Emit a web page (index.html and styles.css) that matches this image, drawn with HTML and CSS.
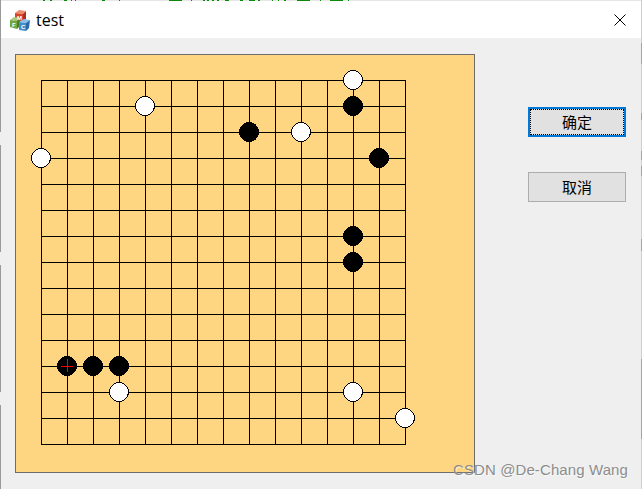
FILE: index.html
```html
<!DOCTYPE html>
<html lang="zh">
<head>
<meta charset="utf-8">
<title>test</title>
<link rel="stylesheet" href="styles.css">
</head>
<body>
<div class="screen">
  <div class="edge-left"></div>
  <div class="window">
    <div class="edge-top"></div>
    <header class="titlebar">
      <svg class="app-icon" width="20" height="21" viewBox="0 0 20 21">
        <polygon class="cube-red-top" points="5,3 9,0 16,1 13,4"/>
        <polygon class="cube-red" points="5,3 13,4 13,12 5,11"/>
        <polygon class="cube-red-side" points="13,4 16,1 16,9 13,12"/>
        <polygon class="cube-green-top" points="0,10 4,7 10,8 7,11"/>
        <polygon class="cube-green" points="0,10 7,11 7,19 0,17"/>
        <polygon class="cube-green-side" points="7,11 10,8 10,16 7,19"/>
        <polygon class="cube-blue-top" points="9,12 14,9 20,10 16,13"/>
        <polygon class="cube-blue" points="9,12 16,13 16,21 9,20"/>
        <polygon class="cube-blue-side" points="16,13 20,10 19,18 16,21"/>
        <text class="cube-letter" x="7" y="9.5">M</text>
        <text class="cube-letter" x="2" y="17">F</text>
        <text class="cube-letter" x="11" y="19">C</text>
      </svg>
      <span class="title">test</span>
      <svg class="close" width="12" height="12" viewBox="0 0 12 12">
        <path d="M0.5 0.5L11.5 11.5M11.5 0.5L0.5 11.5"/>
      </svg>
    </header>
    <main class="content">
      <div class="board">
        <svg class="board-svg" width="458" height="417" viewBox="16 55 458 417">
          <path class="grid" d="M41 80.5H406M41 106.5H406M41 132.5H406M41 158.5H406M41 184.5H406M41 210.5H406M41 236.5H406M41 262.5H406M41 288.5H406M41 314.5H406M41 340.5H406M41 366.5H406M41 392.5H406M41 418.5H406M41 444.5H406M41.5 80V445M67.5 80V445M93.5 80V445M119.5 80V445M145.5 80V445M171.5 80V445M197.5 80V445M223.5 80V445M249.5 80V445M275.5 80V445M301.5 80V445M327.5 80V445M353.5 80V445M379.5 80V445M405.5 80V445"/>
          <circle class="stone white" cx="353" cy="80" r="9.5"/>
          <circle class="stone white" cx="145" cy="106" r="9.5"/>
          <circle class="stone white" cx="301" cy="132" r="9.5"/>
          <circle class="stone white" cx="41" cy="158" r="9.5"/>
          <circle class="stone white" cx="119" cy="392" r="9.5"/>
          <circle class="stone white" cx="353" cy="392" r="9.5"/>
          <circle class="stone white" cx="405" cy="418" r="9.5"/>
          <circle class="stone black" cx="353" cy="106" r="9.5"/>
          <circle class="stone black" cx="249" cy="132" r="9.5"/>
          <circle class="stone black" cx="379" cy="158" r="9.5"/>
          <circle class="stone black" cx="353" cy="236" r="9.5"/>
          <circle class="stone black" cx="353" cy="262" r="9.5"/>
          <circle class="stone black" cx="67" cy="366" r="9.5"/>
          <circle class="stone black" cx="93" cy="366" r="9.5"/>
          <circle class="stone black" cx="119" cy="366" r="9.5"/>
          <path class="last-move" d="M61 366.5H73M67.5 359V372"/>
        </svg>
      </div>
      <div class="actions">
        <button class="btn btn-default" type="button">确定</button>
        <button class="btn" type="button">取消</button>
      </div>
    </main>
  </div>
  <div class="edge-right"></div>
  <div class="watermark">CSDN @De-Chang Wang</div>
</div>
</body>
</html>
```
FILE: styles.css
```css
* { box-sizing: border-box; }
html, body { margin: 0; padding: 0; }
body { width: 642px; height: 489px; overflow: hidden; background: #efefef; }
.screen { position: relative; display: flex; width: 642px; height: 489px; }
.edge-left {
  width: 1px;
  background: linear-gradient(to bottom,
    #9a9a9a 0, #9a9a9a 132px, #efefef 132px, #efefef 145px,
    #9a9a9a 145px, #9a9a9a 252px, #efefef 252px, #efefef 265px,
    #9a9a9a 265px, #9a9a9a 392px, #efefef 392px, #efefef 405px,
    #9a9a9a 405px, #9a9a9a 100%);
}
.edge-right {
  width: 1px;
  background: linear-gradient(to bottom,
    #cfcfcf 0, #cfcfcf 43px, #6fca6f 43px, #6fca6f 64px,
    #cfcfcf 64px, #cfcfcf 113px, #6fca6f 113px, #6fca6f 120px,
    #cfcfcf 120px, #cfcfcf 151px, #6fca6f 151px, #6fca6f 160px,
    #cfcfcf 160px, #cfcfcf 166px, #6fca6f 166px, #6fca6f 176px,
    #cfcfcf 176px, #cfcfcf 239px, #6fca6f 239px, #6fca6f 251px,
    #cfcfcf 251px, #cfcfcf 359px, #6fca6f 359px, #6fca6f 439px,
    #cfcfcf 439px, #cfcfcf 100%);
}
.window { flex: 1; display: flex; flex-direction: column; min-width: 0; }
.edge-top {
  height: 1px;
  background-color: #e6e6e6;
  background-image: linear-gradient(to right,
    transparent 42px, #0a8a0a 42px, #0a8a0a 44px, transparent 44px,
    transparent 49px, #0a8a0a 49px, #0a8a0a 51px, transparent 51px,
    transparent 63px, #0a8a0a 63px, #0a8a0a 66px, transparent 66px,
    transparent 70px, #0a8a0a 70px, #0a8a0a 71px, transparent 71px,
    transparent 74px, #0a8a0a 74px, #0a8a0a 75px, transparent 75px,
    transparent 101px, #0a8a0a 101px, #0a8a0a 104px, transparent 104px,
    transparent 118px, #0a8a0a 118px, #0a8a0a 119px, transparent 119px,
    transparent 168px, #0a8a0a 168px, #0a8a0a 181px, transparent 181px,
    transparent 190px, #0a8a0a 190px, #0a8a0a 191px, transparent 191px,
    transparent 202px, #0a8a0a 202px, #0a8a0a 204px, transparent 204px,
    transparent 206px, #0a8a0a 206px, #0a8a0a 208px, transparent 208px,
    transparent 211px, #0a8a0a 211px, #0a8a0a 213px, transparent 213px,
    transparent 216px, #0a8a0a 216px, #0a8a0a 218px, transparent 218px,
    transparent 224px, #0a8a0a 224px, #0a8a0a 228px, transparent 228px,
    transparent 239px, #0a8a0a 239px, #0a8a0a 242px, transparent 242px,
    transparent 248px, #0a8a0a 248px, #0a8a0a 254px, transparent 254px,
    transparent 257px, #0a8a0a 257px, #0a8a0a 259px, transparent 259px,
    transparent 271px, #0a8a0a 271px, #0a8a0a 272px, transparent 272px,
    transparent 277px, #0a8a0a 277px, #0a8a0a 278px, transparent 278px,
    transparent 283px, #0a8a0a 283px, #0a8a0a 285px, transparent 285px,
    transparent 296px, #0a8a0a 296px, #0a8a0a 309px, transparent 309px,
    transparent 319px, #0a8a0a 319px, #0a8a0a 320px, transparent 320px,
    transparent 329px, #0a8a0a 329px, #0a8a0a 342px, transparent 342px,
    transparent 347px, #0a8a0a 347px, #0a8a0a 348px, transparent 348px);
}
.titlebar {
  height: 37px;
  background: #fff;
  display: flex;
  align-items: center;
  padding: 0 15px 0 9px;
  flex: none;
}
.app-icon { flex: none; margin-right: 6px; margin-top: 1px; }
.cube-red-top { fill: #ef8a6a; }
.cube-red { fill: #d9452c; }
.cube-red-side { fill: #a8301e; }
.cube-green-top { fill: #a9cc7a; }
.cube-green { fill: #6fa63f; }
.cube-green-side { fill: #4d7f2a; }
.cube-blue-top { fill: #8cc0e6; }
.cube-blue { fill: #3f8fcf; }
.cube-blue-side { fill: #2a6aa5; }
.cube-letter {
  font-family: "Liberation Sans", sans-serif;
  font-size: 6px;
  font-weight: 700;
  fill: #fff;
}
.title {
  font-family: "Open Sans", "Noto Sans", sans-serif;
  font-size: 16px;
  color: #000;
  flex: 1;
  line-height: 20px;
}
.close { flex: none; }
.close path { stroke: #000; stroke-width: 1; fill: none; }
.content {
  flex: 1;
  display: flex;
  align-items: flex-start;
  padding: 16px 0 0 14px;
  background: #efefef;
}
.board {
  flex: none;
  width: 460px;
  height: 419px;
  border: 1px solid #6d6d6d;
  background: #fed681;
  overflow: hidden;
}
.board-svg { display: block; overflow: hidden; }
.grid { stroke: #000; stroke-width: 1; fill: none; shape-rendering: crispEdges; }
.stone { stroke: #000; stroke-width: 1; shape-rendering: crispEdges; }
.white { fill: #fff; }
.black { fill: #000; }
.last-move { stroke: #f00; stroke-width: 1; fill: none; shape-rendering: crispEdges; }
.actions {
  flex: none;
  display: flex;
  flex-direction: column;
  gap: 35px;
  margin: 53px 0 0 53px;
}
.btn {
  width: 98px;
  height: 30px;
  padding: 0 0 1px;
  margin: 0;
  background: #e1e1e1;
  border: 1px solid #adadad;
  border-radius: 0;
  color: #000;
  font-family: "Noto Sans CJK SC", "Liberation Sans", sans-serif;
  font-size: 15px;
  line-height: 1;
}
.btn-default {
  border: 2px solid #0078d7;
  outline: 1px dotted #000;
  outline-offset: -3px;
}
.watermark {
  position: absolute;
  left: 453px;
  top: 461px;
  font-family: "Liberation Sans", sans-serif;
  font-size: 15px;
  letter-spacing: 0.1px;
  line-height: 18px;
  white-space: nowrap;
  color: #8d8d8d;
  text-shadow: 1px 1px 1px rgba(255, 255, 255, 0.7);
}
```
